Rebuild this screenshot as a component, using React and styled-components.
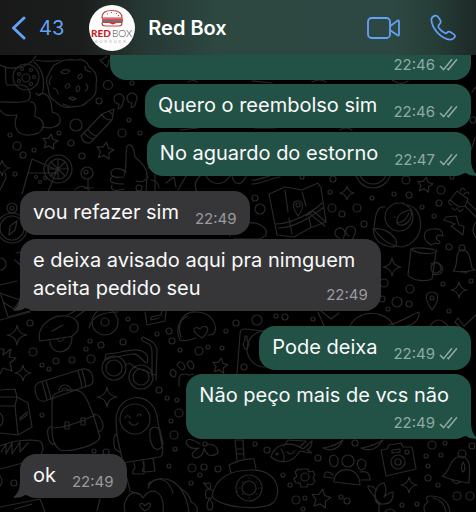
import * as React from 'react';
import styled, { createGlobalStyle, css } from 'styled-components';

const GlobalStyle = createGlobalStyle`
  * {
    box-sizing: border-box;
  }

  body {
    margin: 0;
    background: #000;
    font-family: Inter, 'Liberation Sans', sans-serif;
  }
`;

const Page = styled.div`
  display: flex;
  flex-direction: column;
  min-height: 100vh;
  overflow: hidden;
  background: #000;
`;

const Header = styled.header`
  display: flex;
  align-items: center;
  height: 55px;
  padding: 0 20px 0 11px;
  background: linear-gradient(
    90deg,
    #191919 0%,
    #1b1d1d 17%,
    #263833 30%,
    #2d4741 46%,
    #2d4842 82%,
    #263c36 92%,
    #1d2826 100%
  );
  color: #fff;
`;

const BackButton = styled.button`
  display: flex;
  align-items: center;
  gap: 12px;
  margin-right: 25px;
  padding: 0;
  border: 0;
  background: none;
  color: #62a1f6;
  font: 400 20px/28px Inter, 'Liberation Sans', sans-serif;
`;

const Avatar = styled.svg`
  flex: none;
  width: 46px;
  height: 46px;
  margin-right: 13px;
`;

const Title = styled.h1`
  flex: 1;
  margin: 0;
  font-size: 20px;
  font-weight: 600;
  line-height: 28px;
`;

const Actions = styled.div`
  display: flex;
  align-items: center;
  gap: 30px;
`;

const IconButton = styled.button`
  display: flex;
  padding: 0;
  border: 0;
  background: none;
  color: #62a1f6;
`;

const Chat = styled.main`
  position: relative;
  flex: 1;
  padding: 0 5px 13px 20px;
`;

const Wallpaper = styled.svg`
  position: absolute;
  inset: 0;
  width: 100%;
  height: 100%;
  fill: none;
  stroke: #282828;
  stroke-width: 1.2;
  stroke-linecap: round;
  stroke-linejoin: round;
`;

const Messages = styled.ul`
  position: relative;
  display: flex;
  flex-direction: column;
  gap: 15px;
  margin: 0;
  padding: 0;
  list-style: none;
`;

const Group = styled.li`
  display: flex;
  flex-direction: column;
  align-items: ${({ $mine }) => ($mine ? 'flex-end' : 'flex-start')};
  gap: 4px;
`;

const layouts = {
  row: css`
    display: flex;
    align-items: flex-end;
    gap: 16px;
    padding-bottom: 9px;
  `,
  overlap: css`
    display: grid;
    padding-bottom: 9px;

    > p,
    > div {
      grid-area: 1 / 1;
    }
  `,
  stacked: css`
    display: flex;
    flex-direction: column;
    gap: 4px;

    > p {
      padding-right: 9px;
    }
  `,
  cut: css`
    display: flex;
    justify-content: flex-end;
    width: 80%;
    padding-top: 0;
    padding-bottom: 6px;
    border-radius: 0 0 16px 16px;
  `,
};

const Bubble = styled.div`
  position: relative;
  isolation: isolate;
  max-width: 80%;
  padding: 7px 13px;
  border-radius: 16px;
  background: ${({ $mine }) => ($mine ? '#225146' : '#363638')};
  color: #fafafa;
  ${({ $layout }) => layouts[$layout]};
`;

const Text = styled.p`
  margin: 0;
  font-size: 20px;
  line-height: 28px;
`;

const Meta = styled.div`
  display: flex;
  align-self: flex-end;
  justify-self: end;
  align-items: center;
  gap: 4px;
  height: 19px;
  color: ${({ $mine }) => ($mine ? '#8eaaa2' : '#9a9a9f')};
  font-size: 15px;
  line-height: 20px;
  ${({ $low }) => $low && 'margin-bottom: -2px;'};
`;

const TailShape = styled.svg`
  position: absolute;
  z-index: -1;
  bottom: 0;
  width: 18px;
  height: 18px;
  ${({ $mine }) =>
    $mine ? 'right: -7px; fill: #225146; transform: scaleX(-1);' : 'left: -7px; fill: #363638;'};
`;

const Tail = ({ mine }) => (
  <TailShape $mine={mine} viewBox="0 0 18 18" aria-hidden="true">
    <path d="M7 0 C7 9 5 14 0 17.5 C5 18.2 10 17 12 15 L18 16 V0 Z" />
  </TailShape>
);

const Ticks = () => (
  <svg width="19" height="13" viewBox="0 0 19 13" fill="none" stroke="currentColor" strokeWidth="1.5" aria-hidden="true">
    <path d="M1 8 L4.5 11.6 L13 1.2 M8.3 10.6 L9.4 11.6 L18 1.2" />
  </svg>
);

const groups = [
  {
    mine: true,
    items: [
      { time: '22:46', layout: 'cut' },
      { text: 'Quero o reembolso sim', time: '22:46' },
      { text: 'No aguardo do estorno', time: '22:47', tail: true },
    ],
  },
  {
    mine: false,
    items: [
      { text: 'vou refazer sim', time: '22:49' },
      {
        text: 'e deixa avisado aqui pra nimguem aceita pedido seu',
        time: '22:49',
        layout: 'overlap',
        tail: true,
      },
    ],
  },
  {
    mine: true,
    items: [
      { text: 'Pode deixa', time: '22:49' },
      { text: 'Não peço mais de vcs não', time: '22:49', layout: 'stacked', tail: true },
    ],
  },
  { mine: false, items: [{ text: 'ok', time: '22:49', tail: true }] },
];

const Message = ({ mine, text, time, layout = 'row', tail }) => (
  <Bubble $mine={mine} $layout={layout}>
    {tail ? <Tail mine={mine} /> : null}
    {text ? <Text>{text}</Text> : null}
    <Meta $mine={mine} $low={layout === 'row' || layout === 'overlap'}>
      <time>{time}</time>
      {mine ? <Ticks /> : null}
    </Meta>
  </Bubble>
);

// x, y, radius
const dots = [
  [108, 85, 4.5], [99, 101, 3], [132, 83, 2], [76, 125, 6], [59, 133, 2], [71, 143, 3],
  [82, 156, 3], [122, 133, 4], [129, 120, 2], [140, 133, 2], [10, 135, 2], [17, 146, 4],
  [23, 155, 3], [34, 150, 2], [15, 174, 2], [255, 198, 3], [260, 209, 5], [302, 177, 2],
  [333, 179, 3], [330, 192, 2], [332, 208, 4], [342, 214, 3], [357, 208, 4], [372, 198, 2],
  [364, 224, 3], [394, 194, 2], [409, 195, 3], [406, 180, 4], [422, 207, 2], [441, 190, 4],
  [439, 203, 3], [434, 216, 2], [452, 177, 2], [384, 283, 4], [410, 289, 4], [382, 299, 3],
  [388, 309, 2], [397, 302, 5], [409, 304, 3], [449, 247, 3], [443, 284, 2], [449, 311, 2],
  [471, 281, 2], [257, 320, 5], [285, 317, 3], [276, 316, 2], [236, 323, 3], [313, 319, 2],
  [30, 323, 3], [33, 352, 4], [42, 365, 2], [49, 369, 2], [56, 361, 3], [72, 360, 3],
  [91, 359, 4], [90, 341, 2], [101, 345, 3], [86, 349, 2], [123, 342, 3], [128, 319, 2],
  [134, 328, 4], [157, 334, 2], [169, 331, 3], [172, 341, 3], [180, 350, 2], [42, 415, 2],
  [159, 390, 3], [167, 398, 2], [177, 400, 2], [179, 413, 4], [171, 421, 2], [174, 435, 4],
  [175, 449, 2], [169, 466, 2], [94, 451, 2], [106, 452, 3], [14, 483, 3], [226, 331, 2],
  [199, 351, 4], [208, 347, 2], [222, 348, 2], [244, 367, 3], [192, 468, 4], [204, 467, 3],
  [218, 469, 3], [200, 475, 2], [191, 483, 2], [255, 444, 2], [267, 450, 3], [318, 458, 3],
  [283, 475, 2], [290, 485, 2], [296, 500, 4], [305, 498, 2], [303, 509, 2], [341, 497, 2],
  [347, 501, 3], [355, 443, 3], [432, 445, 4], [445, 443, 2], [426, 456, 2], [441, 455, 2],
  [428, 466, 2], [428, 478, 3], [438, 485, 2], [402, 505, 2], [417, 504, 2], [457, 496, 4],
  [470, 496, 4], [473, 120, 3], [139, 188, 3], [472, 446, 3],
  // round parts of the bigger drawings
  [26, 77, 13], [26, 78, 4], [19, 74, 1.5], [22, 69, 1.5], [31, 70, 1.5], [34, 77, 1.5],
  [31, 84, 1.5], [19, 81, 1.5], [58, 169, 14], [58, 169, 10], [87, 173, 6], [86, 172, 2],
  [12, 228, 15], [12, 228, 12], [12, 208, 5], [12, 208, 2], [399, 217, 14], [373, 170, 18],
  [373, 170, 14], [298, 205, 2], [436, 268, 5], [432, 298, 2], [462, 248, 3], [114, 368, 12],
  [114, 368, 8], [141, 377, 12], [141, 377, 8], [135, 419, 15], [105, 322, 4], [105, 322, 13],
  [265, 349, 18], [249, 488, 13], [249, 488, 7], [305, 477, 4], [398, 462, 7], [398, 462, 3],
  [407, 452, 2], [462, 454, 4], [348, 461, 6], [205, 444, 2], [277, 454, 1], [40, 182, 1.5],
  [36, 177, 1.5], [45, 178, 1.5],
];

// x, y, size
const sparkles = [
  [347, 193, 7], [392, 267, 9], [459, 290, 8], [17, 335, 10], [23, 373, 8], [107, 397, 10],
  [409, 485, 8], [2, 168, 8],
];

const stars = [[50, 142, 8], [105, 151, 9], [425, 185, 8], [220, 366, 8], [321, 499, 10]];

const shapes = [
  // teddy bear
  'M0 65 C8 70 28 70 36 56 M34 62 C42 68 45 80 43 90 C42 96 38 97 36 93 M5 66 C7 74 4 80 7 85 H22 C30 86 33 98 27 101 C15 104 5 101 0 102 M0 110 C5 118 12 115 17 115 C12 128 18 136 30 135 C44 134 46 124 40 119 C36 116 34 118 35 113 C37 106 34 101 30 102 M38 95 C46 90 52 98 52 112 C62 114 63 124 54 127 C48 129 45 127 42 127',
  'M36 60 C45 62 52 62 60 60',
  // cookie
  'M60 62 C66 58 72 60 76 60 C84 58 88 63 89 67 C98 72 97 80 96 86 C97 96 92 98 88 101 C82 108 76 106 70 107 C62 109 58 103 55 101 C48 98 49 91 48 87 C44 78 49 75 51 70 C53 64 57 64 60 62 Z',
  'M61 72 C64 68 69 70 70 71 C67 75 63 74 61 72 Z M78 76 q4 -4 4 1 q-4 4 -4 -1 M65 86 q4 -5 5 0 q-4 5 -5 0 M76 89 q2 -6 4 -1 q-2 7 -4 1 M86 84 q4 4 -1 7 M53 88 q4 0 5 6 M69 98 q4 -2 7 1 q-4 2 -7 -1 M85 66 q-1 5 6 6 M52 76 q-4 6 -2 9 M63 104 l7 3',
  // crayon
  'M81 136 L102 114 L114 109 L112 120 L90 143 Q83 144 81 136 Z M102 114 Q104 120 112 120 M84 132 Q87 138 94 139 M88 129 Q91 135 97 136 M109 111 l3 3',
  'M101 60 L107 56 M100 60 L107 67 L109 60',
  // quotation marks
  'M119 104 a5 5 0 1 1 4 -2 c0 4 -2 6 -5 7 Z M132 103 a5 5 0 1 1 4 -2 c0 4 -2 6 -5 7 Z M340 238 a5 5 0 1 1 4 -2 c0 3 -2 5 -4 6 M349 236 a5 5 0 1 1 5 -1 c0 4 -3 6 -6 7',
  // iced drink
  'M32 159 L57 170 L48 192 M32 159 L22 194 M28 173 H57 M58 159 V179 M48 169 H68 M51 162 L65 176 M65 162 L51 176',
  'M88 179 V188 M84 188 H93',
  // thumbs up
  'M124 175 C128 168 124 147 128 145 C133 144 134 150 135 157 C142 163 147 168 147 176 L146 191 M126 172 C120 167 111 168 111 173 C111 177 115 178 124 177 M112 177 C108 181 111 184 124 184 M112 185 C110 190 114 192 124 189 M136 181 C142 183 146 180 148 177 M148 168 L155 164 V191',
  'M151 180 q7 0 8 8 M166 183 l8 -6 l2 10 M171 177 l-2 -7 M178 190 l8 -14 M200 176 c-8 8 -4 14 -3 16 M206 176 c6 10 18 10 24 0 M232 176 c2 10 10 10 14 0 M252 180 c8 1 12 -4 26 -6 M252 184 c10 0 18 -6 28 -7',
  'M0 190 l5 -10 q2 -2 0 -7 M75 190 c4 -5 9 -5 14 0',
  // compass needle and envelope
  'M9 235 L10 226 L17 221 L15 230 Z M16 253 L21 252 L20 265 L15 260 M0 258 a6 6 0 0 1 0 12 M0 285 L17 281 M0 293 L20 300 M1 295 L8 317 L33 310 M3 302 L14 309 L20 300',
  // folded map
  'M269 194 L285 187 L302 190 L318 183 L321 188 L326 222 L310 228 L294 237 L277 235 Z M276 224 C290 224 310 214 322 203 M278 228 C292 228 310 218 324 207 M306 216 L313 211 L326 222 M310 214 L325 226 M298 216 C290 204 294 201 298 201 C303 201 305 207 298 216',
  'M285 190 L288 212 M289 218 L292 234 M302 192 L306 206 M309 218 L311 227',
  'M230 236 q2 -14 14 -13 q16 -2 22 7 q2 7 -7 9 h-25',
  // duck
  'M385 207 C376 205 375 218 374 229 M374 229 C380 238 388 246 403 247 C420 242 424 225 418 213 C416 208 412 206 407 205 M373 229 C383 227 392 233 396 240 C398 247 393 248 388 246 C380 245 374 239 373 229 M397 223 C396 215 403 211 411 210 C413 219 407 226 399 225 Z M398 223 C404 222 407 218 409 213 M403 203 h1 M394 217 h1',
  // lightning, croissant, guitar
  'M446 217 L456 216 L459 225 L464 226 L463 235 L451 226 L455 224 L444 220 Z',
  'M431 245 C420 238 424 229 433 229 C440 228 443 231 443 236 C438 234 435 236 437 240 C441 241 441 245 436 243 Z',
  'M450 200 L457 191 L468 199 L465 206 L459 207 Z M465 206 L476 217 M468 202 L476 210 M452 205 q-4 0 -3 -5 M457 208 q-2 4 -5 0 M463 209 q-2 4 -5 1 M460 191 q2 -5 5 -1 M464 194 q4 -4 5 0 M476 222 q-6 8 0 16',
  // mug
  'M411 249 C416 247 432 248 437 251 C434 255 416 254 411 249 Z M411 249 L408 275 C412 281 426 282 432 279 L436 252 M431 264 C440 258 446 270 440 274 C436 275 434 275 433 274',
  // bells
  'M453 271 C459 267 454 252 461 250 C469 249 470 258 472 268 L475 270 Q463 273 453 271 Z M462 271 q4 4 6 0',
  'M442 476 C450 474 449 457 461 456 C473 458 469 474 469 483 Q454 481 442 476 Z M452 480 q4 6 8 2 M463 462 q4 6 0 10 q-3 -2 0 -10',
  'M432 310 C422 296 427 292 432 292 C439 292 440 300 432 310 Z',
  'M458 318 L464 326 L476 315 M458 318 L455 322 L464 331 M350 326 C357 310 384 308 394 326 M388 325 C400 323 410 315 419 312 C420 320 412 326 406 326 M318 312 L324 326 M321 311 l10 8 l8 -6 M430 326 q8 -12 18 0',
  // scooter
  'M40 341 C36 328 50 314 66 316 C84 318 80 336 68 337 Z M52 331 L63 325 M50 341 C50 356 72 356 72 337 M57 339 q3 5 7 0 M66 316 L75 311 M76 317 L84 311 M89 328 C92 316 102 312 118 312 M145 312 L147 325 L165 321 L166 311 M151 317 l10 -2 l1 -4 M151 317 v3 l8 -2 M0 320 L30 312 M181 337 C177 325 180 319 188 316',
  // sunglasses
  'M105 360 L106 354 C122 354 138 344 147 355 C148 360 148 363 146 363 C141 359 138 353 132 354 L110 358 Z M125 366 C127 363 130 362 134 367 L156 375 M156 380 L157 350 C156 341 148 340 143 337 C140 338 142 342 145 342 C150 344 152 346 152 352 V376',
  'M0 349 h4 l-1 6 l8 -6 l-2 8 l7 1 l-6 5 l2 8 l-9 -3 l-3 6',
  // backpack
  'M40 382 L82 369 Q92 368 93 379 Q94 385 87 386 L45 401 Q36 403 35 388 Q35 384 40 382 Z M42 382 q3 9 5 18 M46 381 q3 9 5 18 M78 371 q3 9 4 17 M82 370 q3 9 4 17 M53 396 C58 390 75 388 81 392 C88 397 90 408 93 414 L100 437 C98 446 70 452 60 450 C54 446 52 438 52 430 V405 Q52 399 53 396 Z M59 391 a6 6 0 0 1 12 0 M62 391 a3 3 0 0 1 6 0 M52 428 Q68 428 95 415 M65 422 h4 v7 h-4 Z M81 418 h4 v7 h-4 Z M52 426 Q46 428 48 435 Q49 446 56 444 M94 414 Q100 414 103 424 Q104 430 98 432',
  // milk carton and bread
  'M0 390 L15 389 L17 397 L28 403 L32 427 L18 435 L0 433 M17 397 L0 397 M17 397 L15 406 H0 M15 406 L18 435 M17 397 L28 403 M20 418 L27 412 L27 415 L20 420 Z M0 413 q3 3 3 6 q0 5 -3 7',
  'M0 446 C14 440 30 439 40 441 C46 447 42 457 34 460 L0 469 M1 452 l5 -8 v10 l6 -11 v11 l8 -12 v10 l8 -9 M0 476 q4 5 0 10',
  // eskimo
  'M117 436 L116 420 C117 392 152 390 157 416 L161 440 C164 450 163 457 159 457 L123 463 Z M125 418 q3 -5 5 0 M137 416 q3 -4 4 0 M129 422 q5 6 9 1 M116 434 Q112 438 115 449 L121 453 M150 430 Q155 424 160 430 L163 444 Q160 452 154 448 Q149 442 150 430 M134 463 L135 468 Q130 474 135 474 H144 V462 M143 461 L144 467 Q140 472 145 472 L155 471 L153 458',
  // hands holding a heart
  'M125 512 C121 494 138 487 143 498 C152 484 166 493 163 512 M145 511 C135 504 142 501 145 506 C149 500 155 505 145 511 M148 488 C152 475 168 476 173 493 M148 484 C162 473 184 478 189 512 M0 507 L40 499 L45 512 M15 509 l17 -5 M127 478 L130 491 L141 495 M97 511 l3 -12',
  // cap with heart, paw and turntable
  'M180 340 C174 328 182 311 196 312 C212 312 217 325 215 331 Q215 335 208 335 M180 340 Q185 342 196 338 M202 338 C190 331 193 325 200 329 C204 323 214 328 202 338 Z M170 374 q1 -8 6 -2 q0 9 -6 2 M177 365 q3 -7 8 1 q-1 8 -8 -1 M187 364 q4 -7 7 2 q-2 7 -7 -2 M179 386 V378 Q180 372 189 375 L194 374 M237 374 L240 334 Q240 329 245 329 L263 331 M245 336 h2 v4 l2 4 l-2 5 h-2 l-2 -5 l2 -4 Z',
  // submarine
  'M212 496 C216 474 236 470 252 470 C278 470 282 492 274 502 C264 512 218 508 212 496 Z M231 473 L229 465 Q242 458 254 459 L256 469 M237 460 L235 440 H243 L244 458 M237 449 h6 M237 454 h6 M212 490 Q204 486 206 498 L212 498 M209 489 Q200 480 206 484 Q212 480 210 490 M209 499 Q204 510 211 510 Q215 506 210 499',
  'M249 478 h1 M256 482 h1 M259 488 h1 M256 494 h1 M249 498 h1 M242 494 h1 M239 488 h1 M242 482 h1',
  // flower and fish
  'M200 444 Q188 436 186 442 Q188 450 199 448 Q188 454 195 458 Q203 458 204 448 Q208 460 218 453 Q218 444 207 444',
  'M271 457 C274 444 290 440 303 449 L312 441 Q312 448 307 450 Q313 453 311 453 L300 451 C292 464 280 464 271 457 Z M281 449 Q286 456 283 462 M284 446 l4 -6 l18 1 l-6 6 M287 452 q4 4 8 -1 M323 448 Q336 446 343 440 Q336 454 323 448 M361 448 Q374 446 383 440 Q374 454 361 448',
  // gear
  'M302 469 h6 l1 3 l4 -1 l2 4 l-2 3 l2 3 l-3 4 l-4 -1 l-1 3 h-6 l-1 -4 l-4 0 l-2 -4 l3 -3 l-2 -4 l3 -3 l3 1 Z',
  // people
  'M334 482 C334 465 360 465 360 485 Z M330 457 q4 -4 8 1 q1 8 -4 9 q-6 -2 -4 -10 M358 461 q4 -4 8 1 q0 8 -5 8 q-5 -3 -3 -9 M333 475 Q325 468 324 477 L333 478 M360 472 Q370 470 370 480 L361 480',
  // camera
  'M381 450 L387 449 L389 445 L401 443 L403 447 L412 447 L416 469 L386 476 Z M392 450 l8 -1 v3 l-8 1 Z',
  // tulip and melon
  'M375 497 Q367 488 368 486 Q374 486 376 490 Q378 484 384 483 Q388 490 384 497 Q390 492 393 492 Q394 504 383 504 Q375 505 375 497 M376 490 Q373 499 380 503 M379 504 V512 M425 512 Q422 506 428 502 Q424 496 430 496 Q448 496 450 512 M433 498 Q444 500 446 512 M385 512 q5 -6 10 0',
  'M180 488 q10 6 11 14 q8 4 6 10',
  // slivers between the top bubbles
  'M188 82 q6 -3 9 0 M252 81 l20 2 M312 82 q8 -4 14 0 M392 80 q8 6 16 1 M180 130 l18 -2 M255 128 h20 M340 130 q6 -4 12 0 M472 92 l4 -5 M471 150 l4 -12',
];

const sparklePath = ([x, y, s]) =>
  `M${x} ${y - s} Q${x + 1} ${y - 1} ${x + s} ${y} Q${x + 1} ${y + 1} ${x} ${y + s} ` +
  `Q${x - 1} ${y + 1} ${x - s} ${y} Q${x - 1} ${y - 1} ${x} ${y - s} Z`;

const starPath = ([x, y, s]) =>
  Array.from({ length: 10 }, (_, i) => {
    const angle = (i * Math.PI) / 5 - 1.4;
    const r = i % 2 ? s * 0.5 : s;
    return `${i ? 'L' : 'M'}${x + r * Math.cos(angle)} ${y + r * Math.sin(angle)}`;
  }).join(' ') + ' Z';

const Doodles = () => (
  <Wallpaper viewBox="0 55 476 457" preserveAspectRatio="xMidYMin slice" aria-hidden="true">
    {dots.map(([x, y, r]) => (
      <circle key={`${x}-${y}-${r}`} cx={x} cy={y} r={r} />
    ))}
    {[...sparkles.map(sparklePath), ...stars.map(starPath), ...shapes].map(d => (
      <path key={d} d={d} />
    ))}
  </Wallpaper>
);

const Logo = () => (
  <Avatar viewBox="0 0 46 46" role="img" aria-label="Red Box">
    <circle cx="23" cy="23" r="23" fill="#fdfdfd" />
    <g fill="none" stroke="#c4453f" strokeWidth="1.2" strokeLinejoin="round">
      <path d="M13 13 C13 7 17 5.5 23 5.5 S33 7 33 13 Z" />
      <path d="M14 17.5 H33 V18 Q33 21 30 21 H16 Q13 21 13 18 Z" />
    </g>
    <path d="M13 14.2 H34" stroke="#d63c36" strokeWidth="1.4" />
    <path d="M13 16 H34" stroke="#3b2a45" strokeWidth="1.4" />
    <path d="M14 17.8 H28 L24 19.5 L20 18 Z" fill="#cf2a28" />
    <path d="M18 9 h1 M22 7.5 h1 M27 8.5 h1 M29 10.5 h1" stroke="#8d5a55" strokeWidth="1" />
    <text x="2" y="32" fontFamily="Lato, sans-serif" fontSize="10" fontWeight="900" fill="#c81e1e">
      RED
    </text>
    <text x="23" y="32" fontFamily="Lato, sans-serif" fontSize="10" fontWeight="300" fill="#444">
      BOX
    </text>
    <text x="6" y="38" fontFamily="Lato, sans-serif" fontSize="4" letterSpacing="2" fill="#b9b9b9">
      BURGUER
    </text>
  </Avatar>
);

export default function App() {
  return (
    <Page>
      <GlobalStyle />
      <Header>
        <BackButton type="button" aria-label="Back, 43">
          <svg width="16" height="24" viewBox="0 0 16 24" fill="none" stroke="currentColor" strokeWidth="3" strokeLinecap="round" strokeLinejoin="round">
            <path d="M13 2 L2.5 12 L13 22" />
          </svg>
          43
        </BackButton>
        <Logo />
        <Title>Red Box</Title>
        <Actions>
          <IconButton type="button" aria-label="Video call">
            <svg width="33" height="22" viewBox="0 0 33 22" fill="none" stroke="currentColor" strokeWidth="1.8" strokeLinejoin="round">
              <rect x="1" y="1" width="22" height="20" rx="3.5" />
              <path d="M23.5 9 L30.5 3.6 Q32 3 32 4.5 V17.5 Q32 19 30.5 18.2 L23.5 13.5" />
            </svg>
          </IconButton>
          <IconButton type="button" aria-label="Call">
            <svg width="26" height="27" viewBox="0 0 78 81" fill="none" stroke="currentColor" strokeWidth="5" strokeLinejoin="round">
              <path d="M4 17 Q5 8 15 5 Q21 4 25 10 L31 19 Q34 25 29 30 L26 34 Q24 38 26 41 Q34 52 46 58 Q49 59 51 56 Q55 51 61 54 L72 61 Q77 65 74 70 Q69 77 61 77 C35 74 6 47 4 17 Z" />
            </svg>
          </IconButton>
        </Actions>
      </Header>
      <Chat>
        <Doodles />
        <Messages>
          {groups.map(({ mine, items }, i) => (
            <Group key={i} $mine={mine}>
              {items.map((item, j) => (
                <Message key={j} mine={mine} {...item} />
              ))}
            </Group>
          ))}
        </Messages>
      </Chat>
    </Page>
  );
}
